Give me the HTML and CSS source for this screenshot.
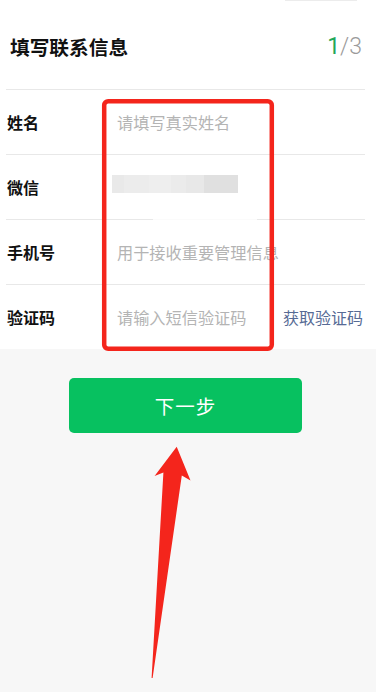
FILE: index.html
```html
<!DOCTYPE html>
<html lang="zh-CN">
<head>
<meta charset="utf-8">
<meta name="viewport" content="width=device-width, initial-scale=1">
<title>填写联系信息</title>
<link rel="stylesheet" href="styles.css">
</head>
<body>
<div class="page">
  <div class="sheet">
    <div class="top-strip"></div>
    <header class="head">
      <h1 class="title">填写联系信息</h1>
      <div class="step"><span class="cur">1</span>/3</div>
    </header>
    <div class="form">
      <div class="row">
        <div class="label">姓名</div>
        <div class="value placeholder">请填写真实姓名</div>
      </div>
      <div class="row">
        <div class="label">微信</div>
        <div class="value">
          <div class="blur">
            <span class="b1"></span><span class="b2"></span><span class="b3"></span><span class="b4"></span><span class="b5"></span><span class="b6"></span>
          </div>
        </div>
      </div>
      <div class="row row-gap">
        <div class="label">手机号</div>
        <div class="value placeholder">用于接收重要管理信息</div>
        <span class="line-gap"></span>
      </div>
      <div class="row">
        <div class="label">验证码</div>
        <div class="value placeholder">请输入短信验证码</div>
        <div class="link">获取验证码</div>
      </div>
    </div>
  </div>
  <div class="actions">
    <button class="next" type="button">下一步</button>
  </div>
  <svg class="annot" width="376" height="692" viewBox="0 0 376 692" aria-hidden="true">
    <rect x="104.2" y="101.2" width="167.6" height="247.6" rx="4" fill="none" stroke="#f4251c" stroke-width="4.5"/>
    <polygon points="176.7,446.7 190.5,480.5 181.8,475.5 152.6,678 151.6,678 163.4,472.5 154.6,476" fill="#f4251c"/>
  </svg>
</div>
</body>
</html>
```
FILE: styles.css
```css
html, body {
  margin: 0;
  padding: 0;
}
body {
  background: #f7f7f7;
  font-family: "Noto Sans CJK SC", "Noto Sans", sans-serif;
  color: #111;
}
.page {
  position: relative;
  width: 376px;
  height: 692px;
  overflow: hidden;
  background: #f7f7f7;
}
.sheet {
  background: #fff;
}
.top-strip {
  height: 1px;
  width: 72px;
  margin-left: 285px;
  background: #ececec;
}
.head {
  height: 88px;
  display: flex;
  align-items: center;
  justify-content: space-between;
  padding: 3px 14px 0 10px;
  box-sizing: border-box;
}
.title {
  margin: 0;
  font-size: 19.7px;
  font-weight: 700;
  line-height: 1;
  color: #111;
}
.step {
  font-family: Roboto, "Noto Sans", sans-serif;
  font-weight: 300;
  font-size: 23px;
  line-height: 1;
  color: #9b9b9b;
}
.step .cur {
  color: #22a85a;
  font-weight: 400;
}
.form {
  margin: 0 11px 0 6px;
}
.row {
  position: relative;
  height: 64px;
  border-top: 1px solid #e8e8e8;
  display: flex;
  align-items: center;
}
.label {
  width: 110px;
  padding-left: 1px;
  flex: none;
  font-size: 16px;
  font-weight: 700;
  line-height: 1;
  color: #111;
}
.value {
  flex: 1;
  font-size: 16.2px;
  line-height: 1;
  white-space: nowrap;
}
.placeholder {
  color: #b4b4b4;
}
.link {
  flex: none;
  font-size: 16px;
  line-height: 1;
  color: #576b95;
  margin-right: 2px;
}
.blur {
  display: flex;
  height: 18px;
  margin-left: -5px;
  margin-top: -6px;
}
.blur span {
  display: block;
  height: 18px;
}
.blur .b1 { width: 12px; background: #e9e9e9; }
.blur .b2 { width: 25px; background: #ececec; }
.blur .b3 { width: 22px; background: #eeeeee; }
.blur .b4 { width: 15px; background: #ebebeb; }
.blur .b5 { width: 18px; background: #e8e8e8; }
.blur .b6 { width: 34px; background: #e0e0e0; }
.line-gap {
  position: absolute;
  top: -1px;
  left: 147px;
  width: 104px;
  height: 1px;
  background: #fbfbfb;
}
.actions {
  padding: 29px 0 0 69px;
}
.next {
  display: block;
  width: 233px;
  height: 55px;
  border: 0;
  border-radius: 5px;
  background: #07c160;
  color: #fff;
  font-family: "Noto Sans CJK SC", "Noto Sans", sans-serif;
  font-size: 19.5px;
  padding: 0;
  letter-spacing: 1px;
}
.annot {
  position: absolute;
  left: 0;
  top: 0;
  pointer-events: none;
}
```
